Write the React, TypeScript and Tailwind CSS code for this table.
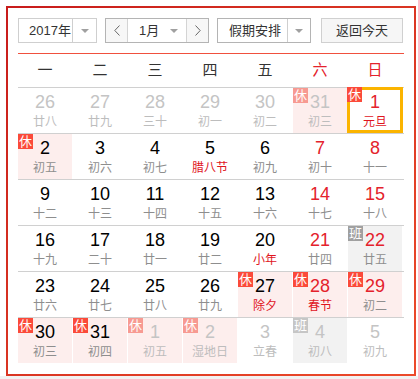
import React from "react";

type Day = {
  d: number;
  l: string;
  other?: boolean;
  red?: boolean;
  lred?: boolean;
  tag?: "休" | "班";
  sel?: boolean;
};

const weeks: Day[][] = [
  [
    { d: 26, l: "廿八", other: true },
    { d: 27, l: "廿九", other: true },
    { d: 28, l: "三十", other: true },
    { d: 29, l: "初一", other: true },
    { d: 30, l: "初二", other: true },
    { d: 31, l: "初三", other: true, tag: "休" },
    { d: 1, l: "元旦", red: true, lred: true, tag: "休", sel: true },
  ],
  [
    { d: 2, l: "初五", tag: "休" },
    { d: 3, l: "初六" },
    { d: 4, l: "初七" },
    { d: 5, l: "腊八节", lred: true },
    { d: 6, l: "初九" },
    { d: 7, l: "初十", red: true },
    { d: 8, l: "十一", red: true },
  ],
  [
    { d: 9, l: "十二" },
    { d: 10, l: "十三" },
    { d: 11, l: "十四" },
    { d: 12, l: "十五" },
    { d: 13, l: "十六" },
    { d: 14, l: "十七", red: true },
    { d: 15, l: "十八", red: true },
  ],
  [
    { d: 16, l: "十九" },
    { d: 17, l: "二十" },
    { d: 18, l: "廿一" },
    { d: 19, l: "廿二" },
    { d: 20, l: "小年", lred: true },
    { d: 21, l: "廿四", red: true },
    { d: 22, l: "廿五", red: true, tag: "班" },
  ],
  [
    { d: 23, l: "廿六" },
    { d: 24, l: "廿七" },
    { d: 25, l: "廿八" },
    { d: 26, l: "廿九" },
    { d: 27, l: "除夕", lred: true, tag: "休" },
    { d: 28, l: "春节", red: true, lred: true, tag: "休" },
    { d: 29, l: "初二", red: true, tag: "休" },
  ],
  [
    { d: 30, l: "初三", tag: "休" },
    { d: 31, l: "初四", tag: "休" },
    { d: 1, l: "初五", other: true, tag: "休" },
    { d: 2, l: "湿地日", other: true, tag: "休" },
    { d: 3, l: "立春", other: true },
    { d: 4, l: "初八", other: true, tag: "班" },
    { d: 5, l: "初九", other: true },
  ],
];

const heads = ["一", "二", "三", "四", "五", "六", "日"];

function Arrow() {
  return (
    <svg width="8" height="4" viewBox="0 0 8 4">
      <path d="M0 0h8L4 4z" fill="#a0a0a0" />
    </svg>
  );
}

function Chevron({ dir }: { dir: "l" | "r" }) {
  return (
    <svg width="6" height="11" viewBox="0 0 6 11">
      <path
        d={dir === "l" ? "M5.5 0.5L0.8 5.5L5.5 10.5" : "M0.5 0.5L5.2 5.5L0.5 10.5"}
        fill="none"
        stroke="#666"
        strokeWidth="1"
      />
    </svg>
  );
}

function DayCell({ day }: { day: Day }) {
  let bg = "bg-white";
  if (day.tag === "休" && !day.sel) bg = "bg-[#fdeeed]";
  if (day.tag === "班") bg = "bg-[#f2f2f2]";

  let num = "text-black";
  if (day.red) num = "text-[#e4222c]";
  if (day.other) num = "text-[#c4c4c4]";

  let lunar = "text-[#8e8e8e]";
  if (day.lred) lunar = "text-[#e0141e]";
  if (day.other) lunar = "text-[#bdbdbd]";

  let badge = "";
  if (day.tag === "休") badge = day.other ? "bg-[#f79a92]" : "bg-[#fb4a3a]";
  if (day.tag === "班") badge = day.other ? "bg-[#c6c6c6]" : "bg-[#a0a0a0]";

  return (
    <div className={`relative w-[54px] h-[45px] mr-[1px] flex flex-col items-center pt-[4px] ${bg}`}>
      {day.sel && (
        <div className="absolute top-[-1px] left-[-1px] right-[-1px] bottom-0 border-[3px] border-[#fbb400]" />
      )}
      {day.tag && (
        <div
          className={`absolute z-10 ${day.sel ? "top-[-1px] left-[-1px]" : "top-0 left-0"} w-[15px] h-[15px] flex items-center justify-center text-[13px] leading-none text-white ${badge}`}
        >
          {day.tag}
        </div>
      )}
      <div className={`text-[18px] leading-[20px] font-['Liberation_Sans',Arial,sans-serif] ${num}`}>
        {day.d}
      </div>
      <div className={`mt-[2px] text-[12px] leading-[16px] ${lunar}`}>{day.l}</div>
    </div>
  );
}

export default function App() {
  return (
    <div className="w-[418px] h-[379px] bg-white flex flex-col font-['Liberation_Sans','Noto_Sans_CJK_SC',sans-serif]">
      <div className="pt-[6px] pl-[6px]">
        <div className="w-[410px] h-[370px] p-[2px] bg-linear-to-br from-[#c81b1b] to-[#ec4a2a]">
          <div className="w-full h-full bg-white p-[10px]">
            {/* toolbar */}
            <div className="flex h-[25px] text-[13px] text-[#333]">
              <div className="flex w-[79px] border border-[#cfcfcf]">
                <div className="flex-1 flex items-center pl-[10px]">2017年</div>
                <div className="w-[24px] border-l border-[#cfcfcf] flex items-center justify-center">
                  <Arrow />
                </div>
              </div>
              <div className="flex w-[104px] ml-[8px] border border-[#b4b4b4]">
                <div className="w-[22px] bg-[#f7f7f7] border-r border-[#d4d4d4] flex items-center justify-center">
                  <Chevron dir="l" />
                </div>
                <div className="flex-1 flex items-center pl-[11px]">1月</div>
                <div className="w-[24px] flex items-center justify-center">
                  <Arrow />
                </div>
                <div className="w-[22px] bg-[#f7f7f7] border-l border-[#d4d4d4] flex items-center justify-center">
                  <Chevron dir="r" />
                </div>
              </div>
              <div className="flex w-[94px] ml-[8px] border border-[#b4b4b4]">
                <div className="flex-1 flex items-center pl-[11px]">假期安排</div>
                <div className="w-[23px] border-l border-[#cfcfcf] flex items-center justify-center">
                  <Arrow />
                </div>
              </div>
              <div className="w-[82px] ml-[10px] border border-[#d0d0d0] bg-[#f6f6f6] flex items-center justify-center">
                返回今天
              </div>
            </div>

            <div className="mt-[10px] h-px bg-[#f0503e]" />

            {/* weekday header */}
            <div className="flex h-[33px]">
              {heads.map((h, i) => (
                <div
                  key={h}
                  className={`w-[54px] mr-[1px] flex items-center justify-center text-[15px] ${i >= 5 ? "text-[#e4222c]" : "text-[#333]"}`}
                >
                  {h}
                </div>
              ))}
            </div>

            {/* day grid */}
            {weeks.map((w, i) => (
              <div key={i} className="flex border-t border-[#d0d0d0]">
                {w.map((d, j) => (
                  <DayCell key={j} day={d} />
                ))}
              </div>
            ))}
          </div>
        </div>
      </div>
      <div className="flex-1 bg-[#f2f2f2]" />
    </div>
  );
}
